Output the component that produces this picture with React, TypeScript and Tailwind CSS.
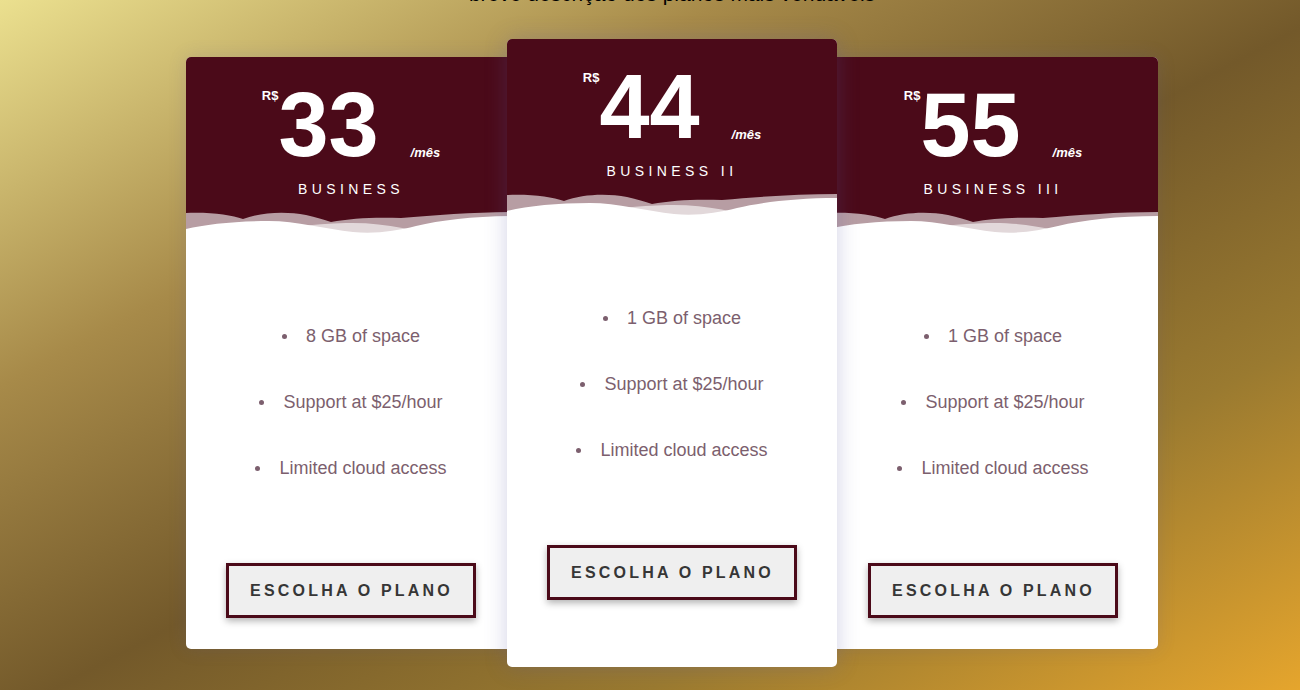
import React from "react";

type Plan = {
  price: string;
  name: string;
  features: string[];
  featured?: boolean;
};

const plans: Plan[] = [
  {
    price: "33",
    name: "BUSINESS",
    features: ["8 GB of space", "Support at $25/hour", "Limited cloud access"],
  },
  {
    price: "44",
    name: "BUSINESS II",
    features: ["1 GB of space", "Support at $25/hour", "Limited cloud access"],
    featured: true,
  },
  {
    price: "55",
    name: "BUSINESS III",
    features: ["1 GB of space", "Support at $25/hour", "Limited cloud access"],
  },
];

const Wave = () => (
  <svg
    viewBox="0 0 330 36"
    preserveAspectRatio="none"
    className="block w-full h-[36px] mt-[11px]"
  >
    <path
      d="M0,6 C25,5 45,8 57,12 C75,5 100,4 120,8 C130,10 138,13 145,15 C165,11 190,10 215,11 C250,8 290,5 330,5 L330,36 L0,36 Z"
      fill="#fff"
      fillOpacity="0.6"
    />
    <path
      d="M0,30 C60,28 100,18 160,16 C200,15 230,24 260,30 L330,30 L330,36 L0,36 Z"
      fill="#fff"
      fillOpacity="0.6"
    />
    <path
      d="M0,22 C20,17 50,14 83,14 C110,14 140,22 167,25 C190,27 210,24 230,19 C255,13 290,9 330,9 L330,36 L0,36 Z"
      fill="#fff"
    />
  </svg>
);

const PlanCard = ({ plan }: { plan: Plan }) => {
  return (
    <div
      className={
        plan.featured
          ? "relative z-10 -mx-[9px] flex h-[628px] w-[330px] flex-col overflow-hidden rounded-[5px] bg-white shadow-[0_0_22px_rgba(90,90,160,0.28)]"
          : "relative flex h-[592px] w-[330px] flex-col overflow-hidden rounded-[5px] bg-white shadow-[0_0_18px_rgba(90,90,160,0.18)]"
      }
    >
      <div className="bg-[#4b0a19] pt-[23px] text-white">
        <div className="flex items-start justify-center">
          <span className="mt-[9px] text-[13px] font-bold leading-none">R$</span>
          <span className="text-[90px] font-bold leading-none">{plan.price}</span>
          <span className="ml-[32px] mt-[66px] text-[13px] font-bold italic leading-none">
            /mês
          </span>
        </div>
        <div className="mt-[12px] text-center text-[14px] leading-none tracking-[4.4px]">
          {plan.name}
        </div>
        <Wave />
      </div>

      <ul className="flex flex-col items-center gap-[44px] pt-[82px] text-[18px] leading-[22px] text-[#7c5f6e]">
        {plan.features.map((f) => (
          <li key={f} className="flex items-center">
            <span className="mr-[19px] inline-block h-[5px] w-[5px] rounded-full bg-[#7c5f6e]" />
            {f}
          </li>
        ))}
      </ul>

      <div className="mt-[84px] flex justify-center">
        <button className="flex h-[55px] w-[250px] items-center justify-center border-[3px] border-[#4b0a19] bg-[#efefef] pl-[1px] text-[16px] font-bold tracking-[3.2px] text-[#363636] shadow-[0_3px_7px_rgba(0,0,0,0.3)]">
          ESCOLHA O PLANO
        </button>
      </div>
    </div>
  );
};

export default function App() {
  return (
    <div className="h-[690px] w-full overflow-hidden bg-[linear-gradient(to_bottom_right,#ebe08f_0%,#a78a49_28%,#73592a_52%,#9a7a30_75%,#e5a52d_100%)] pl-[44px] font-['Liberation_Sans',Arial,sans-serif]">
      <h2 className="-mt-[18px] text-center text-[21px] leading-[24px] text-black">
        breve descrição dos planos mais vendáveis
      </h2>
      <div className="mt-[33px] flex items-center justify-center">
        {plans.map((p) => (
          <PlanCard key={p.name} plan={p} />
        ))}
      </div>
    </div>
  );
}
